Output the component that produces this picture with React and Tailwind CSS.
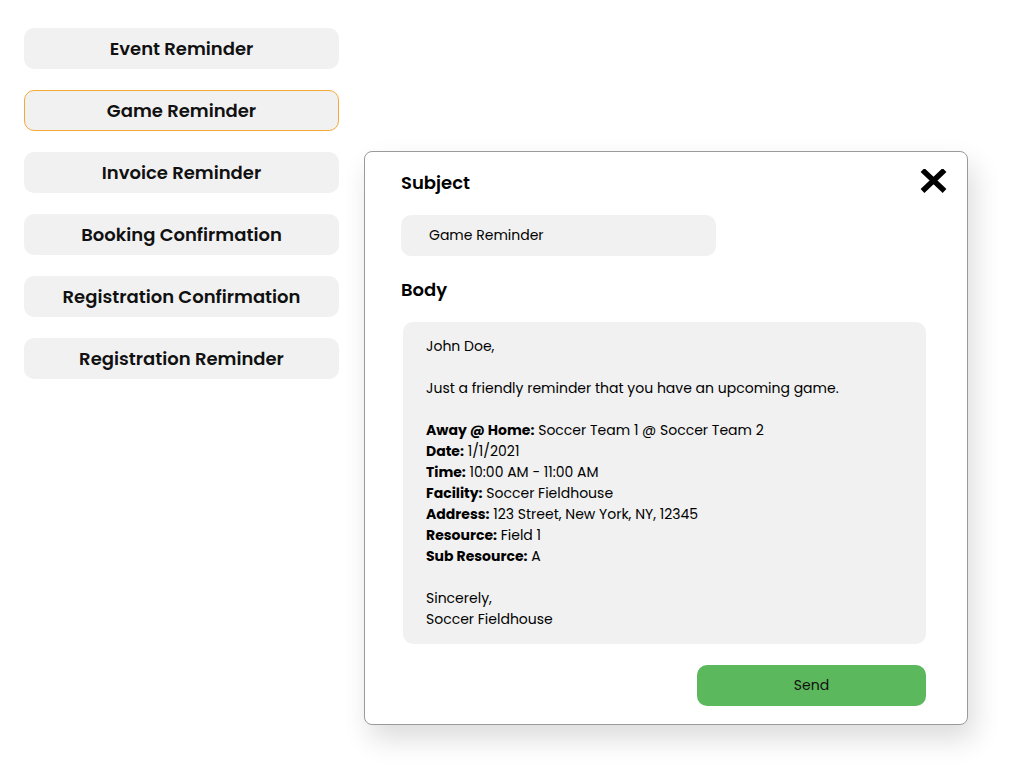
import React from "react";

const templates = [
  "Event Reminder",
  "Game Reminder",
  "Invoice Reminder",
  "Booking Confirmation",
  "Registration Confirmation",
  "Registration Reminder",
];

const details = [
  ["Away @ Home:", "Soccer Team 1 @ Soccer Team 2"],
  ["Date:", "1/1/2021"],
  ["Time:", "10:00 AM - 11:00 AM"],
  ["Facility:", "Soccer Fieldhouse"],
  ["Address:", "123 Street, New York, NY, 12345"],
  ["Resource:", "Field 1"],
  ["Sub Resource:", "A"],
];

const CloseIcon = () => (
  <svg width="27" height="24" viewBox="0 0 27 24" aria-hidden="true">
    <path d="M4.5 3 L22.5 20 M22.5 3 L4.5 20" stroke="#000" strokeWidth="5.5" strokeLinecap="square" />
  </svg>
);

export default function App() {
  const selected = "Game Reminder";

  return (
    <div className="min-h-[774px] bg-white text-black pl-6 pt-[28px] flex items-start" style={{ fontFamily: "Poppins, 'Open Sans', sans-serif" }}>
      {/* template list */}
      <div className="w-[315px] flex flex-col gap-[21px]">
        {templates.map((t) => (
          <button
            key={t}
            className={`h-[41px] rounded-[10px] bg-[#f1f1f1] text-[18px] font-semibold text-[#111] flex items-center justify-center border ${
              t === selected ? "border-[#f5a93a]" : "border-transparent"
            }`}
          >
            {t}
          </button>
        ))}
      </div>

      {/* editor modal */}
      <div className="ml-[25px] mt-[123px] w-[604px] h-[574px] border border-[#9a9a9a] rounded-[8px] bg-white shadow-[6px_14px_28px_rgba(0,0,0,0.14)] pl-[36px] pr-[41px] pt-[16px] flex flex-col">
        <div className="flex items-center justify-between h-[28px] -mr-[21px]">
          <span className="text-[18px] font-semibold">Subject</span>
          <span className="-mt-[2px]">
            <CloseIcon />
          </span>
        </div>

        <div className="mt-[19px] w-[315px] h-[41px] rounded-[10px] bg-[#f1f1f1] pl-[28px] flex items-center text-[14px]">
          Game Reminder
        </div>

        <div className="mt-[19px] h-[28px] flex items-center text-[18px] font-semibold">Body</div>

        <div className="mt-[19px] ml-[2px] h-[322px] rounded-[10px] bg-[#f1f1f1] pl-[23px] pt-[14px] text-[14px] leading-[21px]">
          <div>John Doe,</div>
          <div className="h-[21px]" />
          <div>Just a friendly reminder that you have an upcoming game.</div>
          <div className="h-[21px]" />
          {details.map(([k, v]) => (
            <div key={k}>
              <span className="font-bold">{k}</span> {v}
            </div>
          ))}
          <div className="h-[21px]" />
          <div>Sincerely,</div>
          <div>Soccer Fieldhouse</div>
        </div>

        <div className="mt-[21px] flex justify-end">
          <button className="w-[229px] h-[41px] rounded-[10px] bg-[#5cb85c] text-[14px] text-[#111]">Send</button>
        </div>
      </div>
    </div>
  );
}
